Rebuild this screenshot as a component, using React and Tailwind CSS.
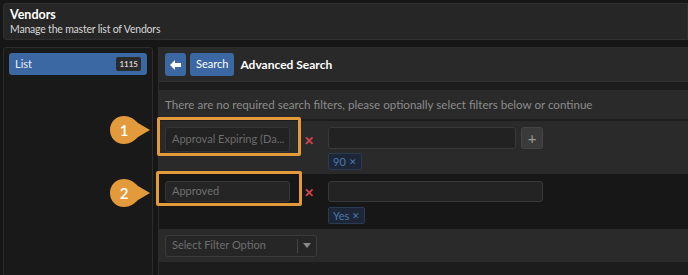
import React from 'react';

function Callout({ n, className }) {
  return (
    <div className={`absolute flex items-center ${className}`}>
      <svg width="42" height="30" viewBox="0 0 42 30">
        <path d="M15 1 C7 1 1 7 1 15 C1 23 7 29 15 29 C21 29 25 26 29 22 L41 15 L29 8 C25 4 21 1 15 1 Z" fill="#e39a3b" />
        <text x="15" y="20.5" textAnchor="middle" fill="#fff" fontSize="15" fontWeight="600" fontFamily="Lato, 'Noto Sans', sans-serif">{n}</text>
      </svg>
    </div>
  );
}

function Tag({ children }) {
  return (
    <div className="flex">
      <span className="flex items-center gap-[3px] h-[17px] px-[4px] rounded-[2px] bg-[#1c2636] border border-[#2a3a52] text-[#4f77b0] text-[11px] leading-none">
        {children}
        <span className="text-[9px]">✕</span>
      </span>
    </div>
  );
}

export default function App() {
  return (
    <div className="w-[688px] h-[275px] overflow-hidden bg-[#161616] pt-[3px] pl-[3px] text-white" style={{ fontFamily: "Lato, 'Noto Sans', sans-serif" }}>
      <div className="h-[37px] bg-[#262626] border border-[#303030] rounded-l-[3px] px-[6px] flex flex-col justify-center">
        <div className="text-[12.5px] font-bold leading-[15px]">Vendors</div>
        <div className="text-[10.5px] tracking-[-0.2px] text-[#d8d8d8] leading-[15px]">Manage the master list of Vendors</div>
      </div>

      <div className="flex mt-[7px] h-[230px]">
        <div className="w-[150px] bg-[#191919] border border-[#2c2c2c] rounded-[3px] p-[5px]">
          <div className="h-[22px] bg-[#3b67a3] rounded-[3px] flex items-center justify-between px-[6px]">
            <span className="text-[11px] text-[#e9eef6]">List</span>
            <span className="text-[8px] font-bold bg-[#2b2b2b] text-[#cfcfcf] rounded-[2px] px-[3px] py-[1px]">1115</span>
          </div>
        </div>

        <div className="relative flex-1 ml-[5px] bg-[#1c1c1c] border-l border-t border-[#2c2c2c]">
          <div className="h-[34px] bg-[#292929] border-b border-[#333] flex items-center gap-[4px] px-[6px]">
            <div className="w-[21px] h-[23px] bg-[#3b67a3] rounded-[3px] flex items-center justify-center">
              <svg width="11" height="10" viewBox="0 0 11 10"><path d="M5 0 L0 5 L5 10 L5 7 L11 7 L11 3 L5 3 Z" fill="#fff" /></svg>
            </div>
            <div className="h-[23px] px-[6px] bg-[#3b67a3] rounded-[3px] flex items-center text-[11px]">Search</div>
            <div className="ml-[2px] text-[12px] font-bold">Advanced Search</div>
          </div>

          <div className="mt-[8px] h-[29px] bg-[#2a2a2a] flex items-center px-[6px] text-[11.6px] text-[#8c8c8c] whitespace-nowrap">
            There are no required search filters, please optionally select filters below or continue
          </div>

          <div className="mt-[2px] h-[53px] bg-[#2a2a2a] flex items-start pt-[6px] px-[6px]">
            <div className="w-[125px] h-[25px] bg-[#222] border border-[#353535] rounded-[3px] flex items-center px-[6px] text-[11px] text-[#6c6c6c] whitespace-nowrap overflow-hidden">Approval Expiring (Da...</div>
            <div className="w-[38px] flex justify-center pt-[5px] text-[#d4444c] text-[12px] font-bold">✕</div>
            <div className="flex flex-col gap-[4px]">
              <div className="flex gap-[5px]">
                <div className="w-[188px] h-[22px] bg-[#222] border border-[#383838] rounded-[3px]" />
                <div className="w-[22px] h-[22px] bg-[#3a3a3a] border border-[#444] rounded-[3px] flex items-center justify-center text-[#9a9a9a] text-[15px] leading-none">+</div>
              </div>
              <Tag>90</Tag>
            </div>
          </div>

          <div className="h-[55px] bg-[#171717] flex items-start pt-[7px] px-[6px]">
            <div className="w-[125px] h-[21px] bg-[#252525] border border-[#353535] rounded-[3px] flex items-center px-[6px] text-[11px] text-[#707070]">Approved</div>
            <div className="w-[38px] flex justify-center pt-[3px] text-[#d4444c] text-[12px] font-bold">✕</div>
            <div className="flex flex-col gap-[5px]">
              <div className="w-[215px] h-[21px] bg-[#232323] border border-[#383838] rounded-[3px]" />
              <Tag>Yes</Tag>
            </div>
          </div>

          <div className="h-[33px] bg-[#2a2a2a] flex items-center px-[6px]">
            <div className="w-[152px] h-[22px] bg-[#262626] border border-[#3b3b3b] rounded-[3px] flex items-center text-[11px] text-[#6e6e6e]">
              <span className="flex-1 px-[6px]">Select Filter Option</span>
              <span className="w-px h-[14px] bg-[#444]" />
              <span className="w-[18px] flex justify-center">
                <svg width="8" height="5" viewBox="0 0 8 5"><path d="M0 0 L8 0 L4 5 Z" fill="#8a8a8a" /></svg>
              </span>
            </div>
          </div>
        </div>
      </div>

      <div className="absolute left-[157px] top-[117px] w-[144px] h-[39px] border-[3px] border-[#e39a3b] rounded-[2px]" />
      <div className="absolute left-[156px] top-[171px] w-[146px] h-[35px] border-[3px] border-[#e39a3b] rounded-[2px]" />
      <Callout n="1" className="left-[109px] top-[115px]" />
      <Callout n="2" className="left-[109px] top-[178px]" />
    </div>
  );
}
